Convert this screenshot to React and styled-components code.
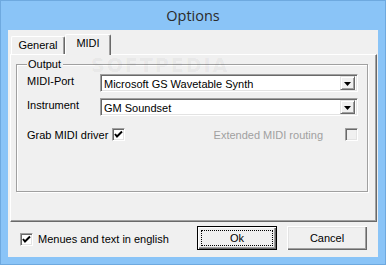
import React from "react";
import styled, { createGlobalStyle } from "styled-components";

const GlobalStyle = createGlobalStyle`
  html, body {
    margin: 0;
    padding: 0;
    background: #8ac4f7;
  }
  * {
    box-sizing: border-box;
  }
`

const Check = () => (
  <svg width="9" height="9" viewBox="0 0 9 9">
    <path d="M1 4 L3 6.5 L8 1.5" fill="none" stroke="#000" strokeWidth="2" />
  </svg>
)

const Arrow = () => (
  <svg width="7" height="4" viewBox="0 0 7 4">
    <path d="M0 0 H7 L3.5 4 Z" fill="#000" />
  </svg>
)

const Combo = (props) => (
  <ComboBox>
    <ComboText>{props.value}</ComboText>
    <ComboBtn>
      <Arrow />
    </ComboBtn>
  </ComboBox>
)

const CheckBox = (props) => (
  <Box disabled={props.disabled}>
    {props.checked && <Check />}
  </Box>
)

const App = () => {
  return (
    <React.Fragment>
      <GlobalStyle />
      <Window>
        <TitleBar>Options</TitleBar>
        <Client>
          <TabControl>
            <TabStrip>
              <Tab>General</Tab>
              <Tab active>MIDI</Tab>
            </TabStrip>
            <Panel>
              <Watermark>SOFTPEDIA</Watermark>
              <GroupBox>
                <Legend>Output</Legend>
                <FormGrid>
                  <Label>MIDI-Port</Label>
                  <Combo value="Microsoft GS Wavetable Synth" />
                  <Label>Instrument</Label>
                  <Combo value="GM Soundset" />
                </FormGrid>
                <OptionRow>
                  <OptionItem gap="4px">
                    <OptionText>Grab MIDI driver</OptionText>
                    <CheckBox checked />
                  </OptionItem>
                  <OptionItem gap="22px">
                    <OptionText disabled>Extended MIDI routing</OptionText>
                    <CheckBox disabled />
                  </OptionItem>
                </OptionRow>
              </GroupBox>
            </Panel>
          </TabControl>
          <BottomBar>
            <BottomCheck>
              <CheckBox checked />
              <span>Menues and text in english</span>
            </BottomCheck>
            <Buttons>
              <Button primary>
                <Focus>Ok</Focus>
              </Button>
              <Button>Cancel</Button>
            </Buttons>
          </BottomBar>
        </Client>
      </Window>
    </React.Fragment>
  )
}

const Window = styled.div`
  width: 386px;
  height: 265px;
  background: #8ac4f7;
  border: 1px solid #6ea9df;
  display: flex;
  flex-direction: column;
  font-family: "Liberation Sans", Arial, sans-serif;
  font-size: 11px;
  color: #000;
`
const TitleBar = styled.div`
  height: 29px;
  display: flex;
  align-items: center;
  justify-content: center;
  padding-bottom: 1px;
  font-family: "Open Sans", "Noto Sans", sans-serif;
  font-size: 14.5px;
  color: #2b2b2b;
`
const Client = styled.div`
  flex: 1;
  margin: 0 7px 7px 7px;
  background: #f0f0f0;
  display: flex;
  flex-direction: column;
`
const TabControl = styled.div`
  padding: 2px 1px 0 2px;
  display: flex;
  flex-direction: column;
`
const TabStrip = styled.div`
  height: 22px;
  display: flex;
  align-items: flex-end;
  padding-left: 1px;
  position: relative;
  z-index: 2;
`
const Tab = styled.div`
  height: ${p => p.active ? "21px" : "18px"};
  padding-top: 2px;
  width: ${p => p.active ? "46px" : "54px"};
  margin-bottom: ${p => p.active ? "-1px" : "0"};
  background: #f0f0f0;
  border-top: 1px solid #fff;
  border-left: 1px solid #fff;
  border-right: 1px solid #696969;
  box-shadow: inset -1px 0 0 #a0a0a0;
  border-radius: 2px 2px 0 0;
  text-align: center;
`
const Panel = styled.div`
  height: 168px;
  position: relative;
  background: #f0f0f0;
  border-top: 1px solid #fff;
  border-left: 1px solid #fff;
  border-right: 1px solid #696969;
  border-bottom: 1px solid #696969;
  box-shadow: inset -1px -1px 0 #a0a0a0;
  padding: 9px 8px 0 5px;
`
const Watermark = styled.div`
  position: absolute;
  left: 80px;
  top: 2px;
  font-family: "DejaVu Sans", sans-serif;
  font-weight: bold;
  font-size: 19px;
  line-height: 16px;
  letter-spacing: 2px;
  color: rgba(0, 0, 0, 0.05);
  pointer-events: none;
  z-index: 3;
`
const GroupBox = styled.div`
  height: 128px;
  border: 1px solid #a0a0a0;
  box-shadow: inset 1px 1px 0 #fff, 1px 1px 0 #fff;
  padding: 0 9px 0 10px;
  display: flex;
  flex-direction: column;
`
const Legend = styled.span`
  align-self: flex-start;
  margin-top: -7px;
  padding: 0 2px 0 1px;
  background: #f0f0f0;
  line-height: 13px;
  position: relative;
  z-index: 4;
`
const FormGrid = styled.div`
  display: grid;
  grid-template-columns: 73px 1fr;
  row-gap: 6px;
  margin-top: 3px;
`
const Label = styled.div`
  height: 18px;
  line-height: 14px;
`
const ComboBox = styled.div`
  height: 18px;
  display: flex;
  align-items: center;
  background: #fff;
  border-top: 1px solid #a0a0a0;
  border-left: 1px solid #a0a0a0;
  border-right: 1px solid #fff;
  border-bottom: 1px solid #fff;
  box-shadow: inset 1px 1px 0 #696969, inset -1px -1px 0 #e3e3e3;
  padding: 2px 2px 2px 3px;
`
const ComboText = styled.div`
  flex: 1;
  white-space: nowrap;
  overflow: hidden;
  line-height: 14px;
  padding-top: 1px;
`
const ComboBtn = styled.div`
  width: 15px;
  height: 14px;
  background: #f0f0f0;
  border-top: 1px solid #e3e3e3;
  border-left: 1px solid #e3e3e3;
  border-right: 1px solid #696969;
  border-bottom: 1px solid #696969;
  box-shadow: inset 1px 1px 0 #fff, inset -1px -1px 0 #a0a0a0;
  display: flex;
  align-items: center;
  justify-content: center;
  padding-top: 1px;
`
const OptionRow = styled.div`
  display: flex;
  justify-content: space-between;
  align-items: center;
  margin-top: 12px;
`
const OptionItem = styled.div`
  display: flex;
  align-items: center;
  gap: ${p => p.gap};
`
const OptionText = styled.span`
  color: ${p => p.disabled ? "#a0a0a0" : "#000"};
`
const Box = styled.div`
  width: 13px;
  height: 13px;
  background: ${p => p.disabled ? "#f0f0f0" : "#fff"};
  border-top: 1px solid #a0a0a0;
  border-left: 1px solid #a0a0a0;
  border-right: 1px solid #fff;
  border-bottom: 1px solid #fff;
  box-shadow: inset 1px 1px 0 #696969, inset -1px -1px 0 #e3e3e3;
  display: flex;
  align-items: center;
  justify-content: center;
  flex-shrink: 0;
`
const BottomBar = styled.div`
  flex: 1;
  display: flex;
  align-items: center;
  justify-content: space-between;
  padding: 0 11px 3px 12px;
`
const BottomCheck = styled.div`
  display: flex;
  align-items: center;
  gap: 5px;
  margin-top: 2px;
`
const Buttons = styled.div`
  display: flex;
  gap: 10px;
`
const Button = styled.div`
  width: 80px;
  height: 24px;
  display: flex;
  align-items: center;
  justify-content: center;
  background: #f0f0f0;
  border: ${p => p.primary ? "1px solid #000" : "none"};
  box-shadow: ${p => p.primary
    ? "inset 1px 1px 0 #fff, inset -1px -1px 0 #696969, inset -2px -2px 0 #a0a0a0"
    : "inset 1px 1px 0 #fff, inset -1px -1px 0 #696969, inset -2px -2px 0 #a0a0a0, inset 2px 2px 0 #e3e3e3"};
  padding: ${p => p.primary ? "3px" : "0"};
`
const Focus = styled.div`
  width: 100%;
  height: 100%;
  border: 1px dotted #000;
  display: flex;
  align-items: center;
  justify-content: center;
`

export default App
